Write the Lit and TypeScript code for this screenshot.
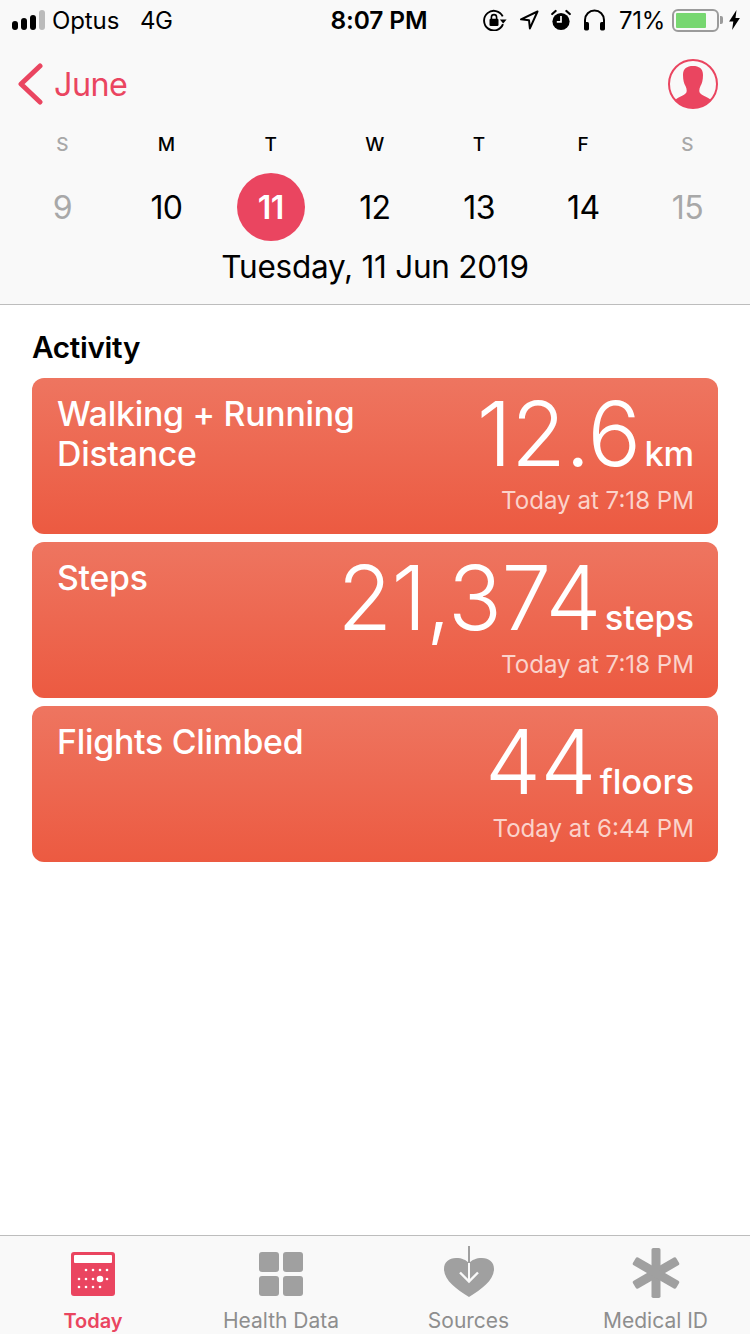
import { LitElement, html, css, svg } from "lit";
import { customElement } from "lit/decorators.js";

const days = [
  { l: "S", n: "9", off: true },
  { l: "M", n: "10" },
  { l: "T", n: "11", sel: true },
  { l: "W", n: "12" },
  { l: "T", n: "13" },
  { l: "F", n: "14" },
  { l: "S", n: "15", off: true },
];

const cards = [
  { title: "Walking + Running Distance", value: "12.6", unit: "km", time: "Today at 7:18 PM" },
  { title: "Steps", value: "21,374", unit: "steps", time: "Today at 7:18 PM" },
  { title: "Flights Climbed", value: "44", unit: "floors", time: "Today at 6:44 PM" },
];

const bars = [9, 12, 15, 20];

const orient = svg`<svg width="24" height="22" viewBox="0 0 24 22"><path d="M19.700 7.400A9.800 9.800 0 1 0 20 15.200" fill="none" stroke="#000" stroke-width="1.900"/><path d="M16.800 10.500h6.800l-3.400 4z" fill="#000"/><rect x="6.500" y="9.800" width="9" height="7.200" rx="1.200" fill="#000"/><path d="M8.400 10V8.200a2.600 2.600 0 0 1 5.200 0V10" fill="none" stroke="#000" stroke-width="1.600"/></svg>`;
const arrow = svg`<svg width="20" height="20" viewBox="0 0 20 20"><path d="M18.500 1.500 2 9.300l8 .9.900 8.200z" fill="none" stroke="#000" stroke-width="2" stroke-linejoin="round"/></svg>`;
const alarm = svg`<svg width="20" height="22" viewBox="0 0 20 22"><circle cx="10" cy="12.500" r="8.600" fill="#000"/><path d="M10 7v5.800H5.800" fill="none" stroke="#f9f9f9" stroke-width="1.700"/><path d="M1.200 5 4.600 2M18.800 5 15.400 2" stroke="#000" stroke-width="2.200" stroke-linecap="round"/></svg>`;
const phones = svg`<svg width="23" height="22" viewBox="0 0 23 22"><path d="M2 15v-4a9.500 9.500 0 0 1 19 0v4" fill="none" stroke="#000" stroke-width="2"/><rect x="1" y="13" width="5" height="8.400" rx="1.600" fill="#000"/><rect x="17" y="13" width="5" height="8.400" rx="1.600" fill="#000"/></svg>`;
const bolt = svg`<svg width="13" height="20" viewBox="0 0 12 20"><path d="M8 0 .6 11.400h4.200L3.600 20l7.800-12H7z" fill="#000"/></svg>`;
const person = svg`<svg width="50" height="50" viewBox="0 0 50 50"><circle cx="25" cy="25" r="24" fill="none" stroke="#ea4560" stroke-width="2"/><path d="M25 7C31 7 35 9.500 35 16 35 21 34 24.500 32.500 27 31.500 29 31 31 31.500 33 32 35.500 38 37.500 41 39.500L43 41A24 24 0 0 1 7 41L9 39.500C12 37.500 18 35.500 18.500 33 19 31 18.500 29 17.500 27 16 24.500 15 21 15 16 15 9.500 19 7 25 7Z" fill="#ea4560"/></svg>`;

const dot = (x: number, y: number) => svg`<circle cx="${x}" cy="${y}" r="1.300" fill="#fff"/>`;
const today = svg`<svg width="44" height="44" viewBox="0 0 44 44"><rect width="44" height="44" rx="3" fill="#ea4560"/><rect x="3" y="3" width="38" height="8" rx="1" fill="#fff"/>${[15, 22, 29, 36].map((x) => dot(x, 18))}${[8, 15, 22, 36].map((x) => dot(x, 27))}<circle cx="29" cy="27" r="3.300" fill="#fff"/>${[8, 15, 22, 29].map((x) => dot(x, 35))}</svg>`;
const grid = svg`<svg width="44" height="44" viewBox="0 0 44 44" fill="#a0a0a0"><rect width="20" height="20" rx="3"/><rect x="24" width="20" height="20" rx="3"/><rect y="24" width="20" height="20" rx="3"/><rect x="24" y="24" width="20" height="20" rx="3"/></svg>`;
const heart = svg`<svg width="50" height="50" viewBox="0 0 50 50" overflow="visible"><g transform="translate(0 1)"><path d="M25 50C12 42 0 33 0 22 0 15 5 11 12 11 18 11 22 13 25 16 28 13 32 11 38 11 45 11 50 15 50 22 50 33 38 42 25 50Z" fill="#a0a0a0"/><path d="M25 -1V16" stroke="#a0a0a0" stroke-width="2" fill="none"/><path d="M25 16V34" stroke="#fafafa" stroke-width="2" fill="none"/><path d="M16 25.500 25 34.500 34 25.500" stroke="#fafafa" stroke-width="2.400" fill="none"/></g></svg>`;
const star = svg`<svg width="48" height="50" viewBox="0 0 48 50" overflow="visible"><g fill="#a0a0a0" transform="translate(0 2)"><rect x="19.500" y="0" width="9" height="50" rx="1.800"/><rect x="19.500" y="0" width="9" height="50" rx="1.800" transform="rotate(60 24 25)"/><rect x="19.500" y="0" width="9" height="50" rx="1.800" transform="rotate(-60 24 25)"/></g></svg>`;

const tabs = [
  { label: "Today", icon: today, on: true },
  { label: "Health Data", icon: grid },
  { label: "Sources", icon: heart },
  { label: "Medical ID", icon: star },
];

@customElement("app-root")
export class AppRoot extends LitElement {
  static styles = css`
    :host {
      display: flex;
      flex-direction: column;
      width: 750px;
      height: 1334px;
      overflow: hidden;
      background: #fff;
      font-family: Inter, "Liberation Sans", sans-serif;
      color: #000;
    }
    .head {
      box-sizing: border-box;
      background: #f9f9f9;
      border-bottom: 1px solid #bdbdbd;
      flex: none;
      height: 305px;
    }
    .status {
      height: 40px;
      display: flex;
      align-items: center;
      font-size: 24px;
      padding: 0 9px 0 12px;
      position: relative;
    }
    .signal {
      display: flex;
      align-items: flex-end;
      gap: 3px;
      height: 20px;
      margin-right: 7px;
    }
    .signal i {
      display: block;
      width: 6px;
      border-radius: 3px;
      background: #000;
    }
    .signal i:last-child {
      background: #bbb;
    }
    .carrier {
      width: 88px;
      letter-spacing: -0.1px;
    }
    .net {
      letter-spacing: -0.4px;
    }
    .clock {
      position: absolute;
      left: 8px;
      right: 0;
      text-align: center;
      font-size: 24.5px;
      font-weight: 600;
      letter-spacing: -0.1px;
    }
    .right {
      margin-left: auto;
      display: flex;
      align-items: center;
    }
    .right svg {
      display: block;
    }
    .icons {
      display: flex;
      align-items: center;
      gap: 12px;
    }
    .pct {
      margin: 0 7px 0 13px;
      letter-spacing: -0.3px;
    }
    .batt {
      width: 47px;
      height: 23px;
      box-sizing: border-box;
      border: 2px solid #9b9b9b;
      border-radius: 6px;
      padding: 2px;
    }
    .batt i {
      display: block;
      height: 100%;
      width: 30px;
      background: #77d770;
      border-radius: 1px;
    }
    .nub {
      width: 3px;
      height: 8px;
      margin-left: 1px;
      background: #9b9b9b;
      border-radius: 0 2px 2px 0;
      margin-right: 5px;
    }
    .nav {
      height: 90px;
      box-sizing: border-box;
      display: flex;
      align-items: center;
      justify-content: space-between;
      padding: 0 32px 2px 18px;
    }
    .back {
      display: flex;
      align-items: center;
      gap: 10px;
      color: #ea4560;
      font-size: 32.3px;
      letter-spacing: -0.5px;
    }
    .nav svg {
      display: block;
    }
    .week {
      display: grid;
      grid-template-columns: repeat(7, 104.2px);
      padding-left: 10.2px;
      margin-top: 1px;
    }
    .day {
      display: flex;
      flex-direction: column;
      align-items: center;
    }
    .letter {
      font-size: 19px;
      font-weight: 500;
      height: 28px;
      line-height: 28px;
    }
    .num {
      width: 68px;
      height: 68px;
      margin-top: 14px;
      border-radius: 50%;
      font-size: 32px;
      display: flex;
      align-items: center;
      justify-content: center;
      letter-spacing: -0.6px;
    }
    .off {
      color: #a8a8a8;
    }
    .sel .num {
      background: #ea4560;
      color: #fff;
      font-weight: 600;
    }
    .date {
      text-align: center;
      font-size: 31.5px;
      line-height: 40px;
      margin-top: 6px;
      letter-spacing: -0.25px;
    }
    .main {
      flex: 1;
      padding: 23px 32px 0;
    }
    h2 {
      margin: 0 0 12px;
      font-size: 29.7px;
      line-height: 38px;
      font-weight: 600;
      letter-spacing: -0.3px;
    }
    .cards {
      display: flex;
      flex-direction: column;
      gap: 8px;
    }
    .card {
      height: 156px;
      box-sizing: border-box;
      border-radius: 12px;
      background: linear-gradient(#ee7560, #ec5a41);
      color: #fff;
      display: flex;
      justify-content: space-between;
      padding: 16px 24px 0 25px;
    }
    .title {
      width: 310px;
      font-size: 33.8px;
      line-height: 40px;
      font-weight: 500;
      letter-spacing: -0.25px;
    }
    .reading {
      display: flex;
      flex-direction: column;
      align-items: flex-end;
      margin-top: -2px;
    }
    .line {
      display: flex;
      align-items: baseline;
      height: 84px;
    }
    .value {
      font-size: 89px;
      line-height: 84px;
      font-weight: 300;
      letter-spacing: -0.6px;
    }
    .unit {
      font-size: 34.5px;
      line-height: 40px;
      font-weight: 500;
      margin-left: 4px;
      letter-spacing: -0.2px;
    }
    .time {
      font-size: 24.1px;
      line-height: 30px;
      margin-top: 10px;
      color: #fbd3cb;
    }
    .tabs {
      flex: none;
      height: 99px;
      box-sizing: border-box;
      background: #f9f9f9;
      border-top: 1px solid #bdbdbd;
      display: grid;
      grid-template-columns: 186px 190px 185px 189px;
    }
    .tab {
      display: flex;
      flex-direction: column;
      align-items: center;
      color: #8e8e8e;
      font-size: 21px;
    }
    .tab .ic {
      height: 60px;
      display: flex;
      align-items: flex-end;
      justify-content: center;
    }
    .tab svg {
      display: block;
    }
    .tab span {
      margin-top: 12px;
      line-height: 26px;
    }
    .tab.on {
      color: #ea4560;
      font-size: 20px;
      font-weight: 600;
    }
  `;

  render() {
    return html`
      <div class="head">
        <div class="status">
          <div class="signal">${bars.map((h) => html`<i style="height:${h}px"></i>`)}</div>
          <span class="carrier">Optus</span><span class="net">4G</span>
          <span class="clock">8:07 PM</span>
          <div class="right">
            <div class="icons">${orient}${arrow}${alarm}${phones}</div>
            <span class="pct">71%</span>
            <div class="batt"><i></i></div>
            <div class="nub"></div>
            ${bolt}
          </div>
        </div>
        <div class="nav">
          <div class="back">
            <svg width="26" height="44" viewBox="0 0 26 44">
              <path d="M22 4 3 22l19 18" fill="none" stroke="#ea4560" stroke-width="5" stroke-linecap="round" stroke-linejoin="round" />
            </svg>
            June
          </div>
          ${person}
        </div>
        <div class="week">
          ${days.map(
            (d) => html`<div class="day ${d.sel ? "sel" : ""}">
              <div class="letter ${d.off ? "off" : ""}">${d.l}</div>
              <div class="num ${d.off ? "off" : ""}">${d.n}</div>
            </div>`
          )}
        </div>
        <div class="date">Tuesday, 11 Jun 2019</div>
      </div>
      <div class="main">
        <h2>Activity</h2>
        <div class="cards">
          ${cards.map(
            (c) => html`<div class="card">
              <div class="title">${c.title}</div>
              <div class="reading">
                <div class="line">
                  <span class="value">${c.value}</span><span class="unit">${c.unit}</span>
                </div>
                <div class="time">${c.time}</div>
              </div>
            </div>`
          )}
        </div>
      </div>
      <div class="tabs">
        ${tabs.map(
          (t) => html`<div class="tab ${t.on ? "on" : ""}">
            <div class="ic">${t.icon}</div>
            <span>${t.label}</span>
          </div>`
        )}
      </div>
    `;
  }
}
